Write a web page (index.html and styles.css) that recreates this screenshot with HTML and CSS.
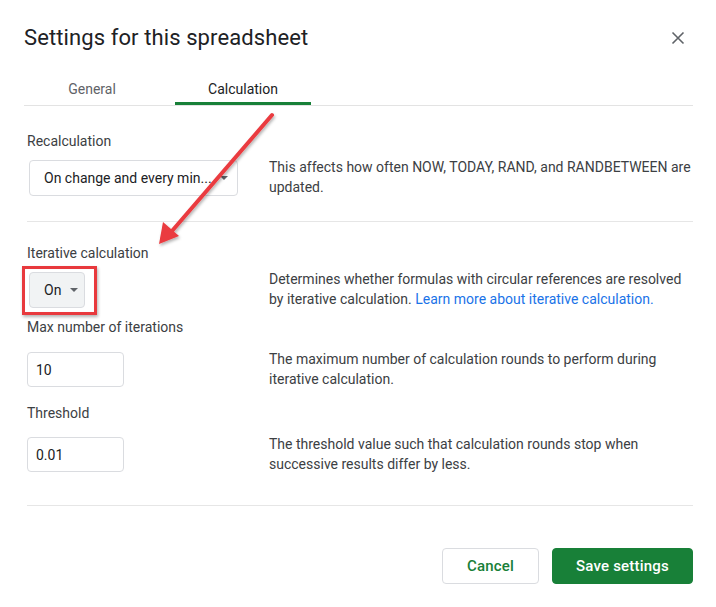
FILE: index.html
```html
<!DOCTYPE html>
<html>
<head>
<meta charset="utf-8">
<link rel="stylesheet" href="styles.css">
</head>
<body>
<div class="dialog">
  <div class="header">
    <h1 class="title">Settings for this spreadsheet</h1>
    <button class="close" aria-label="Close">
      <svg width="14" height="14" viewBox="0 0 14 14"><path d="M1.5 1.5 L12.5 12.5 M12.5 1.5 L1.5 12.5" stroke="#5f6368" stroke-width="1.6" fill="none"/></svg>
    </button>
  </div>
  <div class="tabs">
    <div class="tab">General</div>
    <div class="tab active">Calculation</div>
  </div>

  <div class="section first">
    <div class="label">Recalculation</div>
    <div class="row">
      <div class="control">
        <div class="select wide"><span>On change and every min...</span><span class="caret"></span></div>
      </div>
      <div class="desc">This affects how often NOW, TODAY, RAND, and RANDBETWEEN are updated.</div>
    </div>
  </div>

  <div class="divider mid"></div>

  <div class="section second">
    <div class="label">Iterative calculation</div>
    <div class="row">
      <div class="control">
        <div class="select toggle"><span>On</span><span class="caret"></span></div>
      </div>
      <div class="desc">Determines whether formulas with circular references are resolved by iterative calculation. <span class="link">Learn more about iterative calculation.</span></div>
    </div>
    <div class="label sub">Max number of iterations</div>
    <div class="row input-row">
      <div class="control"><div class="input">10</div></div>
      <div class="desc">The maximum number of calculation rounds to perform during iterative calculation.</div>
    </div>
    <div class="label sub2">Threshold</div>
    <div class="row input-row2">
      <div class="control"><div class="input">0.01</div></div>
      <div class="desc">The threshold value such that calculation rounds stop when successive results differ by less.</div>
    </div>
  </div>

  <div class="divider bottom"></div>

  <div class="footer">
    <button class="btn cancel">Cancel</button>
    <button class="btn save">Save settings</button>
  </div>
</div>

<svg class="arrow" width="716" height="607" viewBox="0 0 716 607">
  <defs>
    <filter id="sh" x="-20%" y="-20%" width="140%" height="140%">
      <feDropShadow dx="1" dy="2" stdDeviation="1.5" flood-color="#000" flood-opacity="0.3"/>
    </filter>
  </defs>
  <g filter="url(#sh)">
    <line x1="272" y1="115" x2="172" y2="231" stroke="#ea3b3f" stroke-width="4" stroke-linecap="round"/>
    <polygon points="159,244 163,222 179,236" fill="#ea3b3f"/>
  </g>
</svg>
</body>
</html>
```
FILE: styles.css
```css
html, body {
  margin: 0;
  padding: 0;
  background: #ffffff;
}
body {
  font-family: Roboto, "Liberation Sans", Arial, sans-serif;
  color: #3c4043;
  width: 716px;
  height: 607px;
  overflow: hidden;
  position: relative;
}
.dialog {
  padding: 24px 23px 24px 24px;
  box-sizing: border-box;
  height: 607px;
  display: flex;
  flex-direction: column;
}
.dialog > * {
  flex-shrink: 0;
}
.header {
  display: flex;
  justify-content: space-between;
  align-items: center;
  height: 28px;
}
.title {
  margin: 0;
  font-weight: 400;
  font-size: 22px;
  line-height: 28px;
  color: #202124;
  letter-spacing: 0.1px;
}
.close {
  border: 0;
  background: none;
  padding: 0;
  width: 24px;
  height: 24px;
  display: flex;
  align-items: center;
  justify-content: center;
  margin-right: 3px;
}
.tabs {
  margin-top: 20px;
  display: flex;
  gap: 15px;
  border-bottom: 1px solid #e3e3e3;
}
.tab {
  width: 136px;
  height: 33px;
  box-sizing: border-box;
  display: flex;
  align-items: center;
  justify-content: center;
  font-size: 14px;
  color: #5f6368;
  padding-top: 4px;
  padding-bottom: 3px;
}
.tab.active {
  color: #202124;
  border-bottom: 3px solid #188038;
  padding-bottom: 0;
}
.section {
  padding-left: 3px;
}
.section.first { margin-top: 25px; }
.section.second { margin-top: 21px; }
.label {
  font-size: 14px;
  line-height: 20px;
  color: #3c4043;
}
.label.sub { margin-top: 8px; }
.label.sub2 { margin-top: 14px; }
.row {
  display: grid;
  grid-template-columns: 242px 1fr;
  margin-top: 9px;
  align-items: start;
}
.input-row { margin-top: 15px; }
.input-row2 { margin-top: 14px; }
.desc {
  font-size: 14px;
  line-height: 20px;
  color: #3c4043;
  margin-top: -3px;
  margin-right: -2px;
}
.link {
  color: #1a73e8;
}
.select {
  display: flex;
  align-items: center;
  justify-content: space-between;
  box-sizing: border-box;
  height: 36px;
  border: 1px solid #dadce0;
  border-radius: 4px;
  font-size: 14px;
  color: #202124;
  margin-left: 2px;
}
.select.wide {
  width: 209px;
  padding: 0 9px 0 14px;
}
.select.toggle {
  width: 56px;
  padding: 0 6px 0 14px;
  background: #f1f3f4;
  position: relative;
}
.select.toggle::after {
  content: "";
  position: absolute;
  left: -8px;
  top: -7px;
  right: -13px;
  bottom: -8px;
  border: 3px solid #e8393d;
  box-shadow: 1px 2px 3px rgba(0,0,0,0.3), inset 0 0 1px rgba(0,0,0,0.1);
}
.caret {
  width: 0;
  height: 0;
  border-left: 4px solid transparent;
  border-right: 4px solid transparent;
  border-top: 4px solid #5f6368;
}
.input {
  width: 97px;
  height: 35px;
  box-sizing: border-box;
  border: 1px solid #dadce0;
  border-radius: 4px;
  padding-left: 8px;
  display: flex;
  align-items: center;
  font-size: 14px;
  color: #202124;
}
.divider {
  height: 1px;
  background: #e6e6e6;
  margin-left: 3px;
}
.divider.mid { margin-top: 24px; }
.divider.bottom { margin-top: 31px; }
.footer {
  margin-top: 42px;
  display: flex;
  justify-content: flex-end;
  gap: 13px;
}
.btn {
  height: 36px;
  border-radius: 4px;
  font-family: Roboto, "Liberation Sans", Arial, sans-serif;
  font-size: 15px;
  font-weight: 500;
  letter-spacing: 0.2px;
}
.cancel {
  width: 97px;
  background: #ffffff;
  border: 1px solid #dadce0;
  color: #188038;
}
.save {
  width: 141px;
  background: #188038;
  border: 1px solid #188038;
  color: #ffffff;
}
.arrow {
  position: absolute;
  left: 0;
  top: 0;
  pointer-events: none;
}
```
